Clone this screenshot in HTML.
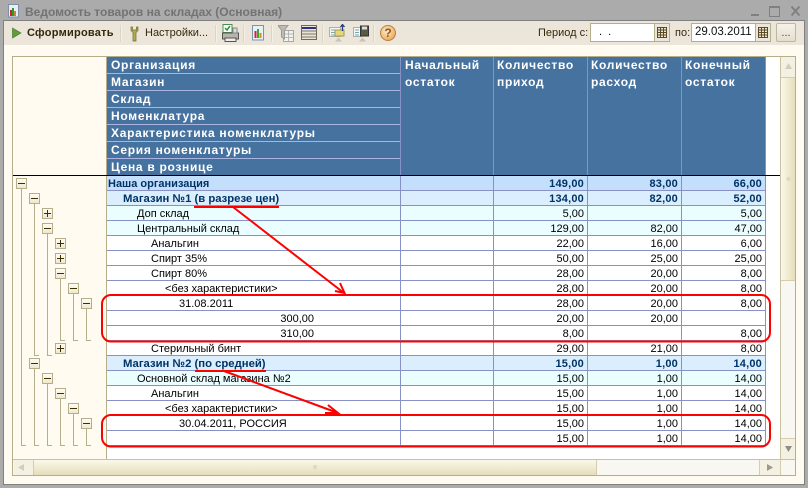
<!DOCTYPE html>
<html><head><meta charset="utf-8">
<style>
html,body{margin:0;padding:0}
body{width:808px;height:488px;overflow:hidden;position:relative;background:#ABABAB;font-family:"Liberation Sans",sans-serif;font-size:11px;color:#000}
div,span{position:absolute;box-sizing:border-box;white-space:nowrap}
.r{left:107px;width:659px;height:15px;border-bottom:1px solid #8891C5;line-height:14px}
.r span{top:1px;line-height:14px}
.n1{right:182px}.n2{right:88px}.n3{right:4px}
.o{background:#C4DFFC;color:#003366;font-weight:bold}
.m{background:#DAEEFE;color:#003366;font-weight:bold}
.s{background:#EAFDFF}
.w{background:#fff}
.o .v,.m .v{letter-spacing:.2px}
.h{left:107px;width:293px;height:17px;background:#4672A0;color:#fff;font-weight:bold;font-size:12px;letter-spacing:.7px;padding-left:4px;line-height:17px}
.hc{top:56px;height:119px;background:#4672A0;color:#fff;font-weight:bold;font-size:12px;letter-spacing:.7px;line-height:17px;padding:1px 0 0 4px}
.sep{top:25px;width:2px;height:17px;background:linear-gradient(90deg,#CFC8B4,#FFFDF6)}
.t{color:#33280A;top:25px;line-height:16px}
</style></head><body>
<div style="left:3px;top:20px;width:802px;height:465px;background:#FFFBF0;border:1px solid #808080"></div>
<div style="left:4px;top:21px;width:800px;height:24px;background:#ECE6DA"></div>
<svg style="position:absolute;left:8px;top:4px" width="12" height="14" viewBox="0 0 12 14"><rect x=".5" y=".5" width="10" height="12.500" fill="#E8EEF2" stroke="#8090A8"/><rect x="2" y="6" width="2" height="6" fill="#D02020"/><rect x="4" y="4" width="2" height="8" fill="#20A030"/><rect x="6" y="7" width="2" height="5" fill="#D08020"/></svg>
<div style="left:25px;top:4px;font-weight:bold;font-size:12px;letter-spacing:0;color:#737373;line-height:16px">Ведомость товаров на складах (Основная)</div>
<svg style="position:absolute;left:748px;top:4px" width="56" height="14" viewBox="0 0 56 14"><rect x="3" y="10" width="8" height="2" fill="#808080"/><rect x="21.500" y="2.500" width="10" height="10" fill="none" stroke="#808080"/><rect x="21" y="2" width="11" height="2" fill="#808080"/><path d="M43.500 2.500l8 9M51.500 2.500l-8 9" stroke="#808080" stroke-width="2"/></svg>

<!-- toolbar -->
<svg style="position:absolute;left:12px;top:27px" width="10" height="12" viewBox="0 0 10 12"><path d="M0.500 1L9 6 .5 11z" fill="#5F9E3C" stroke="#4B7F35" stroke-width=".7"/></svg>
<div class="t" style="left:27px;font-weight:bold;font-size:11px;letter-spacing:.25px">Сформировать</div>
<div class="sep" style="left:120px"></div>
<svg style="position:absolute;left:129px;top:26px" width="11" height="16" viewBox="0 0 11 16"><path d="M2 1v3.500l2 2V15h3V6.500l2-2V1L7.500 1v3h-4V1z" fill="#B3AD4E" stroke="#6B6A30" stroke-width=".7"/></svg>
<div class="t" style="left:145px;letter-spacing:0">Настройки...</div>
<div class="sep" style="left:215px"></div>
<svg style="position:absolute;left:222px;top:24px" width="17" height="18" viewBox="0 0 17 18"><rect x="1" y=".5" width="9" height="8" fill="#fff" stroke="#4D8C50"/><path d="M3 4l2 2 3-4" stroke="#1E9A2E" fill="none" stroke-width="1.500"/><rect x=".5" y="9" width="16" height="6" fill="#B9B5AD" stroke="#555"/><rect x="3" y="14" width="11" height="3.500" fill="#eee" stroke="#555"/><rect x="11" y="4" width="4" height="5" fill="#ddd" stroke="#888"/></svg>
<div class="sep" style="left:243px"></div>
<svg style="position:absolute;left:252px;top:25px" width="13" height="16" viewBox="0 0 13 16"><rect x=".5" y=".5" width="11" height="14.500" fill="#E8EFF6" stroke="#7E93AF"/><rect x="2.500" y="6" width="2" height="7" fill="#D22"/><rect x="5" y="4" width="2" height="9" fill="#3A3"/><rect x="7.500" y="8" width="2" height="5" fill="#D82"/></svg>
<div class="sep" style="left:271px"></div>
<svg style="position:absolute;left:278px;top:25px" width="16" height="17" viewBox="0 0 16 17"><rect x="5.500" y="5.500" width="10" height="11" fill="#F4F2EC" stroke="#A8A8A8"/><path d="M6 9h9M6 12.500h9M10.500 6v10" stroke="#B5B5B5"/><path d="M0 .5h10L6.500 5v9l-3-2V5z" fill="#BDBAB0" stroke="#999"/></svg>
<svg style="position:absolute;left:301px;top:25px" width="17" height="16" viewBox="0 0 17 16"><rect x=".5" y=".5" width="15" height="14" fill="#E8E4D6" stroke="#6F6A5C"/><rect x="1" y="2" width="14" height="2" fill="#2F2F90"/><path d="M1 6h14M1 9h14M1 12h14" stroke="#7A7668"/></svg>
<div class="sep" style="left:322px"></div>
<svg style="position:absolute;left:329px;top:24px" width="18" height="18" viewBox="0 0 18 18"><rect x=".5" y="3.500" width="11" height="9" fill="#F4F6F8" stroke="#A8B0B0"/><path d="M2 6h4M2 8.500h4M2 11h4" stroke="#7AA"/><rect x="6" y="6" width="9" height="6" fill="#E6D878" stroke="#A69A50"/><path d="M13.500 1v6M11.500 3l2-2.500 2 2.500" stroke="#2A3F78" fill="none" stroke-width="1.300"/><path d="M6 17.500l3.500-4 3.500 4z" fill="#C8C4B4"/></svg>
<svg style="position:absolute;left:353px;top:24px" width="17" height="18" viewBox="0 0 17 18"><rect x=".5" y="3.500" width="8" height="9" fill="#F4F6F8" stroke="#A8B0B0"/><path d="M2 6h4M2 8.500h4M2 11h4" stroke="#7AA"/><rect x="7.500" y="2" width="8" height="10" fill="#5A5A40" stroke="#333"/><rect x="9" y="2.500" width="5" height="3" fill="#ddd"/><path d="M6 17.500l3.500-4 3.500 4z" fill="#C8C4B4"/></svg>
<div class="sep" style="left:373px"></div>
<div style="left:380px;top:25px;width:16px;height:16px;border-radius:50%;background:radial-gradient(circle at 40% 35%,#FCE9C8,#EFB069 70%,#D08A40);border:1px solid #B88240;color:#8A5A20;font-weight:bold;font-size:12px;line-height:14px;text-align:center">?</div>

<div class="t" style="left:538px;letter-spacing:0">Период с:</div>
<div style="left:590px;top:23px;width:80px;height:19px;background:#fff;border:1px solid #B5AE8A;line-height:17px;padding-left:8px">.&nbsp;&nbsp;.</div>
<div style="left:654px;top:23px;width:16px;height:19px;background:#ECE6DA;border:1px solid #B5AE8A"></div>
<svg style="position:absolute;left:657px;top:27px" width="10" height="11" viewBox="0 0 10 11"><path d="M.5 .5h9v10h-9zM0 3h10M0 5.500h10M0 8h10M3.500 1v10M6.500 1v10" fill="none" stroke="#5A4A20"/></svg>
<div class="t" style="left:675px">по:</div>
<div style="left:691px;top:23px;width:80px;height:19px;background:#fff;border:1px solid #B5AE8A;line-height:17px;padding-left:3px;font-size:11.500px;color:#111">29.03.2011</div>
<div style="left:755px;top:23px;width:16px;height:19px;background:#ECE6DA;border:1px solid #B5AE8A"></div>
<svg style="position:absolute;left:758px;top:27px" width="10" height="11" viewBox="0 0 10 11"><path d="M.5 .5h9v10h-9zM0 3h10M0 5.500h10M0 8h10M3.500 1v10M6.500 1v10" fill="none" stroke="#5A4A20"/></svg>
<div style="left:776px;top:23px;width:20px;height:19px;background:linear-gradient(#F6F2E8,#E4DECE);border:1px solid #BDB79F;border-radius:2px;text-align:center;line-height:18px;color:#444">...</div>

<!-- table frame -->
<div style="left:12px;top:56px;width:784px;height:420px;background:#fff;border:1px solid #B5AE8A"></div>
<div style="left:13px;top:57px;width:94px;height:402px;background:#FFFBF0;border-right:1px solid #B5AE8A"></div>

<!-- header -->
<div style="left:107px;top:57px;width:659px;height:118px;background:#4672A0"></div>
<div class="h" style="top:57px">Организация</div>
<div class="h" style="top:74px">Магазин</div>
<div class="h" style="top:91px">Склад</div>
<div class="h" style="top:108px">Номенклатура</div>
<div class="h" style="top:125px">Характеристика номенклатуры</div>
<div class="h" style="top:142px">Серия номенклатуры</div>
<div class="h" style="top:159px">Цена в рознице</div>
<div style="left:107px;top:73px;width:293px;height:1px;background:#A9B5E0"></div>
<div style="left:107px;top:90px;width:293px;height:1px;background:#A9B5E0"></div>
<div style="left:107px;top:107px;width:293px;height:1px;background:#A9B5E0"></div>
<div style="left:107px;top:124px;width:293px;height:1px;background:#A9B5E0"></div>
<div style="left:107px;top:141px;width:293px;height:1px;background:#A9B5E0"></div>
<div style="left:107px;top:158px;width:293px;height:1px;background:#A9B5E0"></div>
<div class="hc" style="left:401px;width:92px">Начальный<br>остаток</div>
<div class="hc" style="left:493px;width:94px">Количество<br>приход</div>
<div class="hc" style="left:587px;width:94px">Количество<br>расход</div>
<div class="hc" style="left:681px;width:84px">Конечный<br>остаток</div>

<!-- rows -->
<div class="r o" style="top:176px"><span style="left:1px">Наша организация</span><span class="v n1">149,00</span><span class="v n2">83,00</span><span class="v n3">66,00</span></div>
<div class="r m" style="top:191px"><span style="left:16px;font-size:11.300px">Магазин №1 (в разрезе цен)</span><span class="v n1">134,00</span><span class="v n2">82,00</span><span class="v n3">52,00</span></div>
<div class="r s" style="top:206px"><span style="left:30px">Доп склад</span><span class="n1">5,00</span><span class="n3">5,00</span></div>
<div class="r s" style="top:221px"><span style="left:30px">Центральный склад</span><span class="n1">129,00</span><span class="n2">82,00</span><span class="n3">47,00</span></div>
<div class="r w" style="top:236px"><span style="left:44px">Анальгин</span><span class="n1">22,00</span><span class="n2">16,00</span><span class="n3">6,00</span></div>
<div class="r w" style="top:251px"><span style="left:44px">Спирт 35%</span><span class="n1">50,00</span><span class="n2">25,00</span><span class="n3">25,00</span></div>
<div class="r w" style="top:266px"><span style="left:44px">Спирт 80%</span><span class="n1">28,00</span><span class="n2">20,00</span><span class="n3">8,00</span></div>
<div class="r w" style="top:281px"><span style="left:58px">&lt;без характеристики&gt;</span><span class="n1">28,00</span><span class="n2">20,00</span><span class="n3">8,00</span></div>
<div class="r w" style="top:296px"><span style="left:72px">31.08.2011</span><span class="n1">28,00</span><span class="n2">20,00</span><span class="n3">8,00</span></div>
<div class="r w" style="top:311px"><span style="right:452px">300,00</span><span class="n1">20,00</span><span class="n2">20,00</span></div>
<div class="r w" style="top:326px"><span style="right:452px">310,00</span><span class="n1">8,00</span><span class="n3">8,00</span></div>
<div class="r w" style="top:341px"><span style="left:44px">Стерильный бинт</span><span class="n1">29,00</span><span class="n2">21,00</span><span class="n3">8,00</span></div>
<div class="r m" style="top:356px"><span style="left:16px;font-size:11.300px">Магазин №2 (по средней)</span><span class="v n1">15,00</span><span class="v n2">1,00</span><span class="v n3">14,00</span></div>
<div class="r s" style="top:371px"><span style="left:30px">Основной склад магазина №2</span><span class="n1">15,00</span><span class="n2">1,00</span><span class="n3">14,00</span></div>
<div class="r w" style="top:386px"><span style="left:44px">Анальгин</span><span class="n1">15,00</span><span class="n2">1,00</span><span class="n3">14,00</span></div>
<div class="r w" style="top:401px"><span style="left:58px">&lt;без характеристики&gt;</span><span class="n1">15,00</span><span class="n2">1,00</span><span class="n3">14,00</span></div>
<div class="r w" style="top:416px"><span style="left:72px">30.04.2011, РОССИЯ</span><span class="n1">15,00</span><span class="n2">1,00</span><span class="n3">14,00</span></div>
<div class="r w" style="top:431px"><span class="n1">15,00</span><span class="n2">1,00</span><span class="n3">14,00</span></div>

<!-- column lines -->
<div style="left:400px;top:57px;width:1px;height:389px;background:#8891C5"></div>
<div style="left:493px;top:57px;width:1px;height:389px;background:#8891C5"></div>
<div style="left:587px;top:57px;width:1px;height:389px;background:#8891C5"></div>
<div style="left:681px;top:57px;width:1px;height:389px;background:#8891C5"></div>
<div style="left:765px;top:57px;width:1px;height:389px;background:#8891C5"></div>
<div style="left:13px;top:175px;width:767px;height:1px;background:#000"></div>

<!-- tree + annotations -->
<svg style="position:absolute;left:0;top:0" width="808" height="488" viewBox="0 0 808 488">
<defs><linearGradient id="g" x1="0" y1="0" x2="0" y2="1"><stop offset="0" stop-color="#FFFDF6"/><stop offset="1" stop-color="#EDE7CE"/></linearGradient></defs>
<g stroke="#B5AE8A" fill="none">
<path d="M21.500 188V445.500H26M34.500 203V355.500H39M34.500 368V445.500H39M47.500 233V355.500H52M47.500 383V445.500H52M60.500 278V340.500H65M60.500 398V445.500H65M73.500 293V340.500H78M73.500 413V445.500H78M86.500 308V340.500H91M86.500 428V445.500H91"/>
</g>
<g stroke="#B5AE8A" fill="url(#g)">
<rect x="16.500" y="178.500" width="10" height="10"/>
<rect x="29.500" y="193.500" width="10" height="10"/>
<rect x="42.500" y="208.500" width="10" height="10"/>
<rect x="42.500" y="223.500" width="10" height="10"/>
<rect x="55.500" y="238.500" width="10" height="10"/>
<rect x="55.500" y="253.500" width="10" height="10"/>
<rect x="55.500" y="268.500" width="10" height="10"/>
<rect x="68.500" y="283.500" width="10" height="10"/>
<rect x="81.500" y="298.500" width="10" height="10"/>
<rect x="55.500" y="343.500" width="10" height="10"/>
<rect x="29.500" y="358.500" width="10" height="10"/>
<rect x="42.500" y="373.500" width="10" height="10"/>
<rect x="55.500" y="388.500" width="10" height="10"/>
<rect x="68.500" y="403.500" width="10" height="10"/>
<rect x="81.500" y="418.500" width="10" height="10"/>
</g>
<path stroke="#3C3000" fill="none" d="M18 183.500h7M31 198.500h7M44 213.500h7M47.500 210v7M44 228.500h7M57 243.500h7M60.500 240v7M57 258.500h7M60.500 255v7M57 273.500h7M70 288.500h7M83 303.500h7M57 348.500h7M60.500 345v7M31 363.500h7M44 378.500h7M57 393.500h7M70 408.500h7M83 423.500h7"/>
<g stroke="#FF0000" stroke-width="2" fill="none">
<rect x="102" y="295" width="668" height="46.500" rx="9"/>
<rect x="102" y="415" width="668" height="31.500" rx="9"/>
<path d="M194 207H279M233 207L344 293M335 291L344.500 293L340 283"/>
<path d="M195 371H266M224 371L338 413M328 405L338 413L325 413"/>
</g>

<!-- scrollbars -->
<defs>
<linearGradient id="v" x1="0" y1="0" x2="1" y2="0"><stop offset="0" stop-color="#FBF8E8"/><stop offset="1" stop-color="#E3DCB8"/></linearGradient>
<linearGradient id="h" x1="0" y1="0" x2="0" y2="1"><stop offset="0" stop-color="#FBF8E8"/><stop offset="1" stop-color="#E3DCB8"/></linearGradient>
</defs>
<rect x="780" y="57" width="16" height="402" fill="#F9F7F1"/>
<rect x="13" y="459" width="783" height="17" fill="#F9F7F1"/>
<path d="M780.500 57V459M13 459.500H796" stroke="#C8C2A4"/>
<rect x="781" y="57" width="15" height="20" fill="#F4F1E2"/>
<rect x="781" y="78" width="15" height="203" fill="url(#v)"/>
<rect x="781" y="438" width="15" height="21" fill="#F4F1E2"/>
<path d="M781 77.500H796M781 280.500H796M781 438.500H796" stroke="#D4CEAF"/>
<path d="M788.500 63l-3.500 6h7z" fill="#CFCDC0"/>
<path d="M785 446h7l-3.500 6z" fill="#8F8E82"/>
<circle cx="788.500" cy="179" r="2" fill="#DDD8C0"/>
<rect x="14" y="460" width="19" height="16" fill="#F4F1E2"/>
<rect x="34" y="460" width="563" height="16" fill="url(#h)"/>
<rect x="759" y="460" width="21" height="16" fill="#F4F1E2"/>
<path d="M33.500 460V476M596.500 460V476M759.500 460V476M780.500 460V476" stroke="#D4CEAF"/>
<path d="M24 464l-6 3.500 6 3.500z" fill="#CFCDC0"/>
<path d="M767 464l6 3.500-6 3.500z" fill="#9B9A8E"/>
<circle cx="315" cy="467" r="2" fill="#DDD8C0"/>
</svg>
<div style="left:12px;top:56px;width:784px;height:420px;border:1px solid #B5AE8A"></div>
</body></html>
